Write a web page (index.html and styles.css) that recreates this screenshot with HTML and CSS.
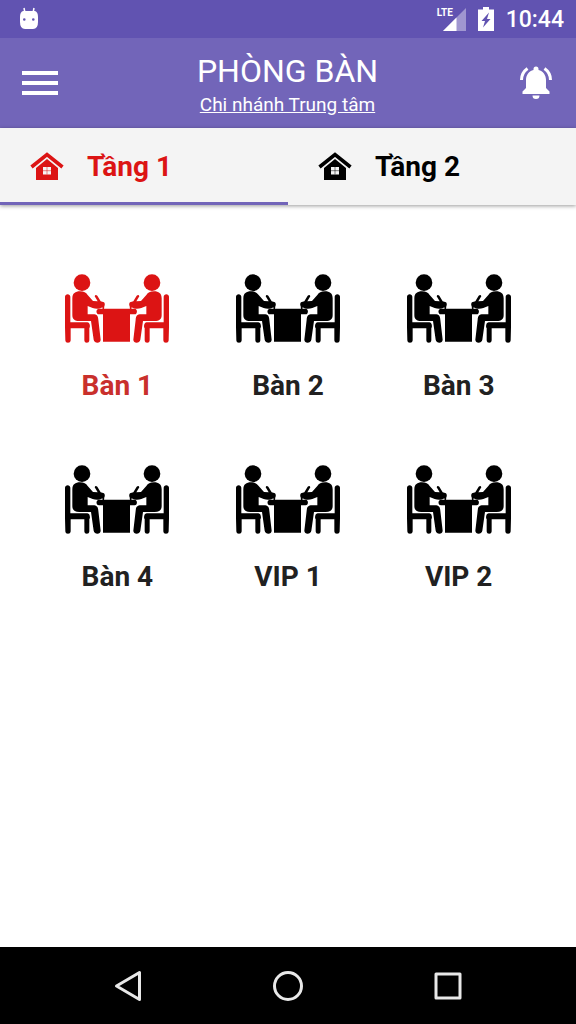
FILE: index.html
```html
<!DOCTYPE html>
<html lang="vi">
<head>
<meta charset="utf-8">
<meta name="viewport" content="width=device-width, initial-scale=1">
<title>Phòng bàn</title>
<link rel="stylesheet" href="styles.css">
</head>
<body>
<svg class="sprite" aria-hidden="true">
  <symbol id="house" viewBox="0 0 34 29">
    <path d="M1.500 15 17 2.500 32.500 15" fill="none" stroke="currentColor" stroke-width="3.600"/>
    <path fill="currentColor" fill-rule="evenodd" d="M17 7 28 16V28H6V16ZM13 15v7.500h8V15Z"/>
    <path d="M17 15v7.500M13 18.700h8" stroke="currentColor" stroke-opacity=".5"/>
  </symbol>
  <symbol id="diner" viewBox="42 36 160 216">
    <g fill="currentColor">
      <circle cx="96" cy="68" r="25"/>
      <path d="M67 115c0-15 9-21 23-21 12 0 18 4 23 11l16 18 14 1-9-15q2-7 8-2l10 17 10 3c3 3 3 8 1 12l-1 9h-4l-1-6c-10 6-20 5-29 2l-15-6v25h16c12 0 15 5 16 16l7 60c0 12-19 12-21 0l-8-56H88c-14 0-21-6-21-18Z"/>
      <path d="M45 110c0-10 16-10 16 0v77h51c9 0 9 17 6 17v37c0 10-15 10-15 0v-36H62v36c0 10-16 10-16 0l-1-39Z"/>
    </g>
  </symbol>
  <symbol id="table" viewBox="42 36 318 216">
    <use href="#diner" x="42" y="36" width="160" height="216"/>
    <use href="#diner" x="42" y="36" width="160" height="216" transform="matrix(-1 0 0 1 402 0)"/>
    <path fill="currentColor" d="M147 146H254c9 0 9 17 0 17h-14v82h-81v-82h-12c-10 0-10-17 0-17Z"/>
  </symbol>
</svg>
<div class="screen">
  <div class="status">
    <svg class="droid" viewBox="0 0 20 24" role="img" aria-label="Android">
      <path d="M5 1 6 6M15 1 14 6" stroke="#fff" stroke-width="1.500"/>
      <path fill="#fff" fill-rule="evenodd" d="M4 4h12q3 1 3 6v5q0 7-5 7H6q-5 0-5-7v-5q0-5 3-6ZM4 12.500a1.300 1.300 0 1 0 2.600 0a1.300 1.300 0 1 0-2.600 0ZM13 12.500a1.300 1.300 0 1 0 2.600 0a1.300 1.300 0 1 0-2.600 0Z"/>
    </svg>
    <div class="system">
      <div class="network">
        <span class="lte">LTE</span>
        <svg class="signal" viewBox="0 0 23 23" aria-hidden="true">
          <path fill="#fff" fill-opacity=".4" d="M23 0V23H0Z"/>
          <path fill="#fff" d="M13.500 9.500V23H0Z"/>
        </svg>
      </div>
      <svg class="battery" viewBox="0 0 16 24" role="img" aria-label="Đang sạc">
        <path fill="#fff" fill-rule="evenodd" d="M5 0h6v2.500h5V24H0V2.500h5ZM11 5.500 3.500 14H7L5 20.500 12.500 12H9Z"/>
      </svg>
      <time class="clock">10:44</time>
    </div>
  </div>
  <header class="appbar">
    <button class="icon-button" type="button" aria-label="Menu">
      <svg class="menu-icon" viewBox="0 0 36 26" fill="#fff"><path d="M0 1h36v4H0ZM0 11h36v4H0ZM0 21h36v4H0Z"/></svg>
    </button>
    <div class="heading">
      <h1 class="title">PHÒNG BÀN</h1>
      <a class="branch" href="#">Chi nhánh Trung tâm</a>
    </div>
    <button class="icon-button icon-button-end" type="button" aria-label="Thông báo">
      <svg class="bell-icon" viewBox="0 0 34 34">
        <path fill="#fff" d="M14.500 4V3a2.500 2.500 0 0 1 5 0v1C24 5 27 9 27 14v8l3.500 3.500V28h-27v-2.500L7 22v-8c0-5 3-9 7.500-10ZM13.500 29.500h7a3.500 3.500 0 0 1-7 0Z"/>
        <path fill="none" stroke="#fff" stroke-width="3" d="M2.500 14C2.500 9 5 5 8.500 2.500M31.500 14c0-5-2.500-9-6-11.500"/>
      </svg>
    </button>
  </header>
  <nav class="tabs">
    <button class="tab tab-active" type="button" aria-current="true"><svg class="house"><use href="#house"/></svg>Tầng 1</button>
    <button class="tab" type="button"><svg class="house"><use href="#house"/></svg>Tầng 2</button>
  </nav>
  <main class="tables">
    <button class="place place-busy" type="button"><svg class="seats"><use href="#table"/></svg><span>Bàn 1</span></button>
    <button class="place" type="button"><svg class="seats"><use href="#table"/></svg><span>Bàn 2</span></button>
    <button class="place" type="button"><svg class="seats"><use href="#table"/></svg><span>Bàn 3</span></button>
    <button class="place" type="button"><svg class="seats"><use href="#table"/></svg><span>Bàn 4</span></button>
    <button class="place" type="button"><svg class="seats"><use href="#table"/></svg><span>VIP 1</span></button>
    <button class="place" type="button"><svg class="seats"><use href="#table"/></svg><span>VIP 2</span></button>
  </main>
  <footer class="navbar">
    <button class="nav-button" type="button" aria-label="Quay lại"><svg class="nav-icon" viewBox="0 0 32 32"><path d="M27.500 2.500V29.500L4.500 16Z"/></svg></button>
    <button class="nav-button" type="button" aria-label="Màn hình chính"><svg class="nav-icon" viewBox="0 0 32 32"><circle cx="16" cy="16" r="13.500"/></svg></button>
    <button class="nav-button" type="button" aria-label="Gần đây"><svg class="nav-icon" viewBox="0 0 32 32"><path d="M4 4H28V28H4Z"/></svg></button>
  </footer>
</div>
</body>
</html>
```
FILE: styles.css
```css
* {
  box-sizing: border-box;
}

body {
  margin: 0;
  font-family: Roboto, "Noto Sans", sans-serif;
  background: #fff;
}

button {
  padding: 0;
  border: 0;
  background: none;
  color: inherit;
  font: inherit;
  cursor: pointer;
}

svg {
  display: block;
}

.sprite {
  position: absolute;
  width: 0;
  height: 0;
}

.screen {
  display: flex;
  flex-direction: column;
  min-height: 100vh;
}

.status {
  display: flex;
  align-items: center;
  justify-content: space-between;
  height: 38px;
  padding: 0 12px 0 19px;
  background: #6153b1;
  color: #fff;
}

.droid {
  width: 20px;
  height: 24px;
}

.system {
  display: flex;
  align-items: center;
  gap: 12px;
}

.network {
  display: flex;
  position: relative;
  padding-left: 6px;
}

.lte {
  position: absolute;
  left: 0;
  top: -2px;
  font-family: "Liberation Sans Narrow", Roboto, sans-serif;
  font-size: 10px;
  font-weight: 700;
  line-height: 14px;
}

.signal {
  width: 23px;
  height: 23px;
}

.battery {
  width: 16px;
  height: 24px;
}

.clock {
  padding-top: 2px;
  font-size: 23px;
  font-weight: 500;
  line-height: 36px;
}

.appbar {
  display: grid;
  grid-template-columns: 1fr auto 1fr;
  align-items: center;
  height: 90px;
  padding: 0 23px 0 22px;
  background: #7265b9;
  color: #fff;
}

.icon-button {
  justify-self: start;
}

.icon-button-end {
  justify-self: end;
}

.menu-icon {
  width: 36px;
  height: 26px;
}

.bell-icon {
  width: 34px;
  height: 34px;
}

.heading {
  display: flex;
  flex-direction: column;
  align-items: center;
  padding-top: 4px;
}

.title {
  margin: 0;
  font-size: 32px;
  font-weight: 400;
  line-height: 40px;
}

.branch {
  color: inherit;
  font-size: 19px;
  line-height: 28px;
}

.tabs {
  display: grid;
  grid-template-columns: 1fr 1fr;
  background: #f4f4f4;
  box-shadow: 0 1px 4px rgba(0, 0, 0, 0.4);
}

.tab {
  display: flex;
  align-items: center;
  gap: 23px;
  height: 77px;
  padding: 3px 30px 0;
  border-bottom: 3px solid transparent;
  color: #000;
  font-size: 28px;
  font-weight: 700;
}

.tab-active {
  border-bottom-color: #7265b9;
  color: #dc1414;
}

.house {
  width: 34px;
  height: 29px;
}

.tables {
  display: grid;
  grid-template-columns: repeat(3, 1fr);
  flex: 1;
  align-content: start;
  row-gap: 57px;
  padding: 67px 32px;
}

.place {
  display: flex;
  flex-direction: column;
  align-items: center;
  gap: 22px;
  color: #212121;
  font-size: 28px;
  font-weight: 700;
  line-height: 40px;
}

.seats {
  width: 106px;
  height: 72px;
  color: #000;
}

.place-busy {
  color: #c9302c;
}

.place-busy .seats {
  color: #dc1414;
}

.navbar {
  display: grid;
  grid-template-columns: repeat(3, 1fr);
  height: 77px;
  padding: 0 48px;
  background: #000;
}

.nav-button {
  display: flex;
  align-items: center;
  justify-content: center;
}

.nav-icon {
  width: 32px;
  height: 32px;
  fill: none;
  stroke: #e8e8e8;
  stroke-width: 3;
  stroke-linejoin: round;
}
```
